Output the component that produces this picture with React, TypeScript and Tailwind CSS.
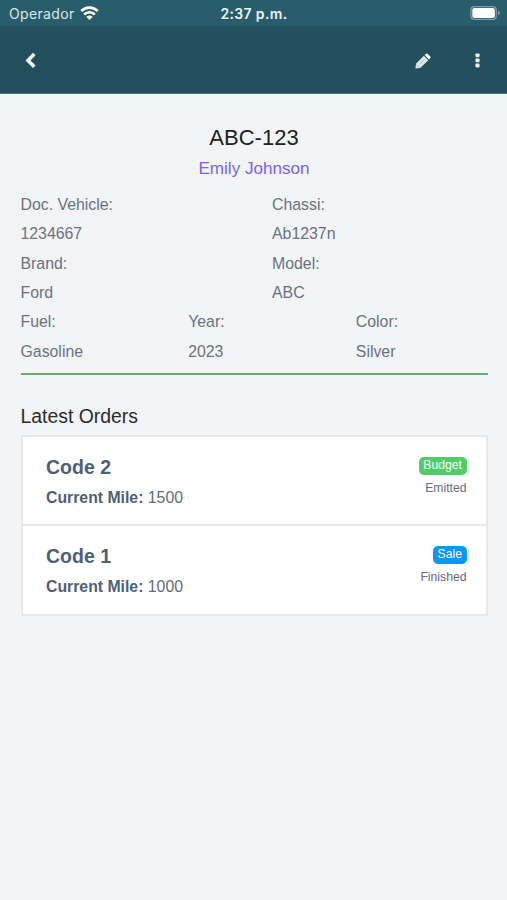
import clsx from 'clsx';

type Order = {
    id: number;
    mile: number;
    kind: 'Budget' | 'Sale';
    status: string;
};

const orders: Order[] = [
    { id: 2, mile: 1500, kind: 'Budget', status: 'Emitted' },
    { id: 1, mile: 1000, kind: 'Sale', status: 'Finished' },
];

const StatusBar = () => (
    <div className="grid h-[26px] grid-cols-3 items-center bg-[#295d6b] pl-[9px] pr-[6px] pt-px font-['Inter',sans-serif] text-[14px] text-[#d9e8ec]">
        <div className="flex items-center gap-[5px]">
            <span className="tracking-[0.35px]">Operador</span>
            <svg className="-mt-px" width="19" height="14" viewBox="0 0 19 14" fill="none" stroke="#fff" strokeWidth="2.6">
                <path d="M1.2 5a11.8 11.8 0 0 1 16.6 0" />
                <path d="M4.2 8.5a7.5 7.5 0 0 1 10.6 0" />
                <path d="M9.5 14 6.4 10.9a4.4 4.4 0 0 1 6.2 0Z" fill="#fff" stroke="none" />
            </svg>
        </div>
        <span className="-ml-[2px] text-center font-semibold tracking-[0.35px] text-[#edf5f7]">2:37 p.m.</span>
        <svg className="-mt-px justify-self-end" width="31" height="14" viewBox="0 0 31 14">
            <rect x="0.9" y="0.7" width="25.4" height="12.6" rx="3.4" fill="none" stroke="#7d9fa8" strokeWidth="1.2" />
            <rect x="2.3" y="2.1" width="22.6" height="9.8" rx="2" fill="#fff" />
            <path d="M28 4.8c1.4.5 1.9 1.3 1.9 2.2s-.5 1.7-1.9 2.2Z" fill="#7d9fa8" />
        </svg>
    </div>
);

const BackIcon = () => (
    <svg width="11" height="17" viewBox="0 0 11 17" fill="none" stroke="currentColor" strokeWidth="3.5">
        <path d="M9.3 2.1 3 8.4l6.3 6.3" />
    </svg>
);

const PencilIcon = () => (
    <svg width="16" height="16" viewBox="0 0 16 16" fill="currentColor">
        <path d="M8.8 2.8 13.2 7.2 5.6 14.8 1.2 15.6Q.3 15.7.4 14.8L1.2 10.4Z" />
        <path d="M9.6 2 11 .8q.8-.7 1.6 0l2.6 2.6q.8.8.1 1.6L14 6.4Z" fill="#fff" />
        <path d="M4.4 11.3 9.6 6.1" stroke="#9db5b6" strokeWidth="0.8" />
        <path d="m1.9 12.2 1.9 1.9" stroke="#7f9ca0" strokeWidth="0.8" />
    </svg>
);

const MoreIcon = () => (
    <svg width="17" height="15" viewBox="0 0 17 15" fill="currentColor">
        <rect x="6.4" y="0.4" width="4.2" height="3.8" rx="1.1" />
        <rect x="6.4" y="5.5" width="4.2" height="3.8" rx="1.1" />
        <rect x="6.4" y="10.6" width="4.2" height="3.8" rx="1.1" />
    </svg>
);

const Header = () => (
    <header className="flex h-[68px] items-center border-b border-[#47707d] bg-[#24505e] pl-[25px] pr-[21px] pt-[2px] text-white">
        <button aria-label="Back">
            <BackIcon />
        </button>
        <div className="ml-auto flex items-center">
            <button aria-label="Edit" className="mr-[38px] text-[#dce8e6]">
                <PencilIcon />
            </button>
            <button aria-label="More" className="text-[#e8f1f1]">
                <MoreIcon />
            </button>
        </div>
    </header>
);

const Field = ({ label, value }: { label: string; value: string }) => (
    <div>
        <p>{label}:</p>
        <p>{value}</p>
    </div>
);

const OrderRow = ({ order }: { order: Order }) => (
    <li className="flex h-[89.5px] justify-between border-b-2 border-[#e6e8ea] pl-[23.5px] pr-[19px] pt-[17px]">
        <div>
            <h3 className="text-[19.5px] font-bold leading-[27px]">Code {order.id}</h3>
            <p className="mt-[5px] text-[15.8px] leading-6">
                <b>Current Mile:</b> <span className="text-[#5f6c80]">{order.mile}</span>
            </p>
        </div>
        <div className="flex flex-col items-end pt-[3px] text-[12.2px]">
            <span
                className={clsx(
                    'h-[18px] rounded-[5px] px-[4.5px] leading-[17px] text-white',
                    order.kind === 'Budget' ? 'bg-[#50cd65]' : 'bg-[#0a97f8]'
                )}
            >
                {order.kind}
            </span>
            <span className="mt-[4px] leading-[18px] text-[#666b80]">{order.status}</span>
        </div>
    </li>
);

export default function App() {
    return (
        <div className="min-h-screen overflow-hidden bg-[#f2f4f6] font-['Liberation_Sans',Arial,sans-serif] text-[#4f6076]">
            <StatusBar />
            <Header />
            <main className="pl-[20.5px] pr-[19.5px] pt-[29px]">
                <h1 className="text-center text-[22px] leading-[30px] text-[#222]">ABC-123</h1>
                <p className="mt-[3px] text-center text-[17.1px] leading-[26px] text-[#7a62eb]">Emily Johnson</p>

                <section className="-mr-9 mt-[8px] text-[15.85px] leading-[29.35px] text-[#697382]">
                    <div className="grid grid-cols-2">
                        <Field label="Doc. Vehicle" value="1234667" />
                        <Field label="Chassi" value="Ab1237n" />
                        <Field label="Brand" value="Ford" />
                        <Field label="Model" value="ABC" />
                    </div>
                    <div className="grid grid-cols-3">
                        <Field label="Fuel" value="Gasoline" />
                        <Field label="Year" value="2023" />
                        <Field label="Color" value="Silver" />
                    </div>
                </section>
                <hr className="mt-[6.5px] border-t-2 border-[#6ba872]" />

                <h2 className="mt-[27px] text-[19.4px] leading-7 text-[#2b2b2b]">Latest Orders</h2>
                <ul className="mt-[5px] border-2 border-b-0 border-[#e6e8ea] bg-white">
                    {orders.map((order) => (
                        <OrderRow key={order.id} order={order} />
                    ))}
                </ul>
            </main>
        </div>
    );
}
